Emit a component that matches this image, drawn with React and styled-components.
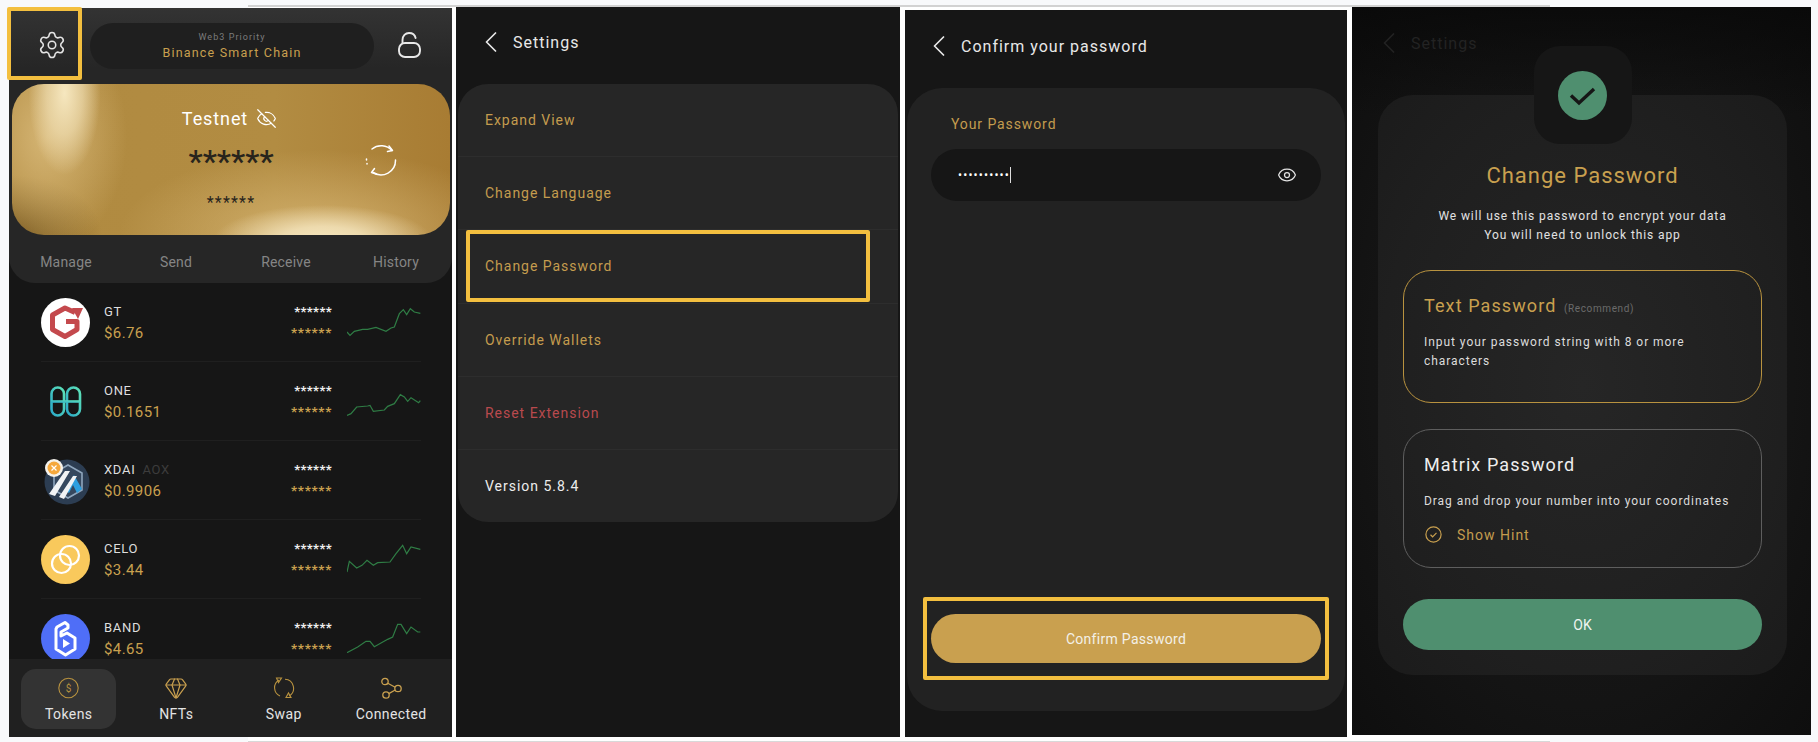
import React from "react";
import styled, { createGlobalStyle } from "styled-components";
import { Settings, EyeOff, Eye, Gem } from "lucide-react";

const tokens = [
  {
    name: "GT",
    price: "$6.76",
    logo: "gt",
    spark: "0,75 9,85 22,73 47,67 62,67 87,61 117,73 132,63 142,60 157,20 169,8 179,23 190,5 202,15 220,19",
  },
  {
    name: "ONE",
    price: "$0.1651",
    logo: "one",
    spark: "0,88 12,83 29,63 62,60 69,58 79,76 112,72 122,61 142,53 160,26 172,33 182,46 192,35 215,50 220,44",
  },
  { name: "XDAI", sub: "AOX", price: "$0.9906", logo: "xdai" },
  {
    name: "CELO",
    price: "$3.44",
    logo: "celo",
    spark: "0,84 7,52 29,72 45,64 60,49 79,64 92,56 129,54 147,29 167,4 179,29 192,9 220,16",
  },
  {
    name: "BAND",
    price: "$4.65",
    logo: "band",
    spark: "0,89 32,72 57,55 69,55 82,71 122,49 137,42 152,4 162,4 179,32 192,12 212,27 220,27",
  },
];

const menu = [
  { label: "Expand View", tone: "gold" },
  { label: "Change Language", tone: "gold" },
  { label: "Change Password", tone: "gold", marked: true },
  { label: "Override Wallets", tone: "gold" },
  { label: "Reset Extension", tone: "red" },
  { label: "Version 5.8.4", tone: "white" },
];

function TokenLogo({ kind }) {
  if (kind === "gt") {
    return (
      <svg width="49" height="49" viewBox="0 0 49 49">
        <circle cx="24.5" cy="24.5" r="24.5" fill="#fff" />
        <path d="M34 14.5 L24 10 L11.5 17 V31.5 L24 38.5 L36 31.5 V23.5 H25" fill="none" stroke="#c4494d" strokeWidth="5" strokeLinejoin="round" />
        <path d="M31 10 L42 10 L37 21 Z" fill="#c4494d" />
      </svg>
    );
  }
  if (kind === "one") {
    return (
      <svg width="49" height="49" viewBox="0 0 49 49">
        <defs>
          <linearGradient id="oneGrad" x1="0" y1="1" x2="1" y2="0">
            <stop offset="0" stopColor="#2aa9c9" />
            <stop offset="1" stopColor="#5fe3b8" />
          </linearGradient>
        </defs>
        <g fill="none" stroke="url(#oneGrad)" strokeWidth="2.6">
          <rect x="10.5" y="10.5" width="12.5" height="28" rx="6.2" />
          <rect x="26" y="10.5" width="13" height="28" rx="6.5" />
        </g>
        <rect x="10" y="23.2" width="29" height="2.6" fill="url(#oneGrad)" />
      </svg>
    );
  }
  if (kind === "xdai") {
    return (
      <svg width="49" height="49" viewBox="0 0 49 49">
        <circle cx="26" cy="26" r="22.5" fill="#2c3d52" />
        <path d="M27 9 L41 17 V34 L27 42 L13 34 V17 Z" fill="#35485f" stroke="#8fa6bd" strokeWidth="1.6" />
        <path d="M24 34 L33 19 L41 33 L36 37 L32 29 L28 37 Z" fill="#2d9fe0" />
        <path d="M8 38 L24 15 H29 L14 40 Z M18 41 L32 20 H36 L23 43 Z" fill="#f1f3f5" />
        <circle cx="13" cy="12" r="9" fill="#f4f2ec" />
        <circle cx="13" cy="12" r="6.5" fill="#f5a83c" />
        <path d="M10.5 9.5 L15.5 14.5 M15.5 9.5 L10.5 14.5" stroke="#fff" strokeWidth="1.2" />
      </svg>
    );
  }
  if (kind === "celo") {
    return (
      <svg width="49" height="49" viewBox="0 0 49 49">
        <circle cx="24.5" cy="24.5" r="24.5" fill="#f9c95c" />
        <g fill="none" stroke="#fff" strokeWidth="2.2">
          <circle cx="20.5" cy="28.5" r="9.5" />
          <circle cx="28.5" cy="20.5" r="9.5" />
        </g>
      </svg>
    );
  }
  return (
    <svg width="49" height="49" viewBox="0 0 49 49">
      <circle cx="24.5" cy="24.5" r="24.5" fill="#4f6ef7" />
      <path d="M16 13 L24 8.5 L27 11 V14 L20 18 V22 L26 19 L34 24 V35 L24.5 41 L15 35 V15 Z" fill="none" stroke="#fff" strokeWidth="3" strokeLinejoin="round" />
      <path d="M22 25 L29 29.5 L22 34 Z" fill="#fff" />
    </svg>
  );
}

function BackArrow() {
  return (
    <svg width="12" height="20" viewBox="0 0 12 20" fill="none" stroke="currentColor" strokeWidth="1.7" strokeLinecap="round" strokeLinejoin="round">
      <path d="M10.5 1 L1.5 10 L10.5 19" />
    </svg>
  );
}

function PanelHeader({ title, height, lift, left, dim }) {
  return (
    <Header $height={height} $lift={lift} $left={left} $dim={dim}>
      <BackArrow />
      <span>{title}</span>
    </Header>
  );
}

function TokensPanel() {
  return (
    <Panel $width={443} $top={8} $height={729}>
      <WalletHead>
        <TopBar>
          <GearBox>
            <Settings size={30} strokeWidth={1.25} color="#e4e4e4" />
          </GearBox>
          <ChainPill>
            <small>Web3 Priority</small>
            <b>Binance Smart Chain</b>
          </ChainPill>
          <LockIcon width="23" height="26" viewBox="0 0 23 26" fill="none" stroke="#e8e8e8" strokeWidth="1.9">
            <rect x="1" y="11" width="21" height="14" rx="6" />
            <path d="M4.5 11 V8 C4.5 3.8 7.5 1 11 1 C14.5 1 17 3 17.6 6" strokeLinecap="round" />
          </LockIcon>
        </TopBar>
        <GoldCard>
          <NetName>
            Testnet <EyeOff size={21} strokeWidth={1.4} color="#fff" />
          </NetName>
          <BigStars>******</BigStars>
          <SmallStars>******</SmallStars>
          <SyncIcon width="32" height="32" viewBox="0 0 32 32" fill="none" stroke="#fff" strokeWidth="1.5" strokeLinecap="round" strokeLinejoin="round">
            <path d="M7 5 A14.5 14.5 0 0 1 27 6.5" />
            <path d="M24 2 L27.5 6.5 L22.5 7.5" />
            <path d="M30.5 16 A14.5 14.5 0 0 1 8 28.5" />
            <path d="M9.5 24.5 L6.5 28.5 L11.5 30" />
            <path d="M1.5 16 V15 M2 20 V19.5" />
          </SyncIcon>
        </GoldCard>
        <Actions>
          <span>Manage</span>
          <span>Send</span>
          <span>Receive</span>
          <span>History</span>
        </Actions>
      </WalletHead>
      <TokenList>
        {tokens.map((t) => (
          <TokenRow key={t.name}>
            <TokenLogo kind={t.logo} />
            <TokenText>
              <span>
                {t.name}
                {t.sub && <em>{t.sub}</em>}
              </span>
              <b>{t.price}</b>
            </TokenText>
            <Balance>
              <span>******</span>
              <b>******</b>
            </Balance>
            <Spark viewBox="0 0 222 90">
              {t.spark && <polyline points={t.spark} fill="none" stroke="#2f7d45" strokeWidth="3.6" />}
            </Spark>
          </TokenRow>
        ))}
      </TokenList>
      <BottomNav>
        <NavTab $active>
          <svg width="21" height="21" viewBox="0 0 21 21">
            <circle cx="10.5" cy="10.5" r="9.7" fill="none" stroke="#b8923f" strokeWidth="1.1" />
            <DollarMark x="10.5" y="14" textAnchor="middle">$</DollarMark>
          </svg>
          <span>Tokens</span>
        </NavTab>
        <NavTab>
          <Gem size={24} strokeWidth={1.2} color="#c9a04f" />
          <span>NFTs</span>
        </NavTab>
        <NavTab>
          <svg width="22" height="22" viewBox="0 0 22 22" fill="none" stroke="#b8923f" strokeWidth="1.1">
            <path d="M6 3 A9 9 0 0 0 7 19" />
            <path d="M12 2.2 A9 9 0 0 1 16 19" />
            <path d="M3.5 1 H8.5 L5.5 5.5 Z M18 20.5 H13 L15.5 16 Z" />
          </svg>
          <span>Swap</span>
        </NavTab>
        <NavTab>
          <svg width="22" height="22" viewBox="0 0 22 22" fill="none" stroke="#c9a04f" strokeWidth="1.3">
            <circle cx="5" cy="4.5" r="3.2" />
            <circle cx="18" cy="11.5" r="3.2" />
            <circle cx="6" cy="18" r="3.2" />
            <path d="M7.8 6.2 L15.2 10.2 M8.8 16.6 L15.2 13" />
          </svg>
          <span>Connected</span>
        </NavTab>
      </BottomNav>
    </Panel>
  );
}

function SettingsPanel() {
  return (
    <Panel $width={444} $top={7} $height={730}>
      <PanelHeader title="Settings" height={77} lift={7} left={29} />
      <MenuCard>
        {menu.map((m) => (
          <MenuRow key={m.label} $tone={m.tone}>
            {m.label}
            {m.marked && <Marker $inset="0 28px 1px 8px" />}
          </MenuRow>
        ))}
      </MenuCard>
    </Panel>
  );
}

function ConfirmPanel() {
  return (
    <Panel $width={442} $top={10} $height={727} $nudge={1}>
      <PanelHeader title="Confirm your password" height={78} lift={6} left={28} />
      <ConfirmCard>
        <FieldLabel>Your Password</FieldLabel>
        <PasswordField>
          <Dots>••••••••••</Dots>
          <Caret />
          <Eye size={20} strokeWidth={1.5} color="#e2e2e2" />
        </PasswordField>
        <ConfirmButton>
          Confirm Password
          <Marker $inset="-17px -8px -17px -8px" />
        </ConfirmButton>
      </ConfirmCard>
    </Panel>
  );
}

function ChangePanel() {
  return (
    <Panel $width={459} $top={7} $height={728} $nudge={1} $glow>
      <PanelHeader title="Settings" height={88} lift={16} left={31} dim />
      <ChangeCard>
        <CheckTile>
          <svg width="49" height="49" viewBox="0 0 49 49">
            <circle cx="24.5" cy="24.5" r="24.5" fill="#4f8f6f" />
            <path d="M13 24.5 L21 32 L36 18" fill="none" stroke="#161616" strokeWidth="3.4" />
          </svg>
        </CheckTile>
        <ChangeTitle>Change Password</ChangeTitle>
        <ChangeText>
          We will use this password to encrypt your data
          <br />
          You will need to unlock this app
        </ChangeText>
        <OptionBox $selected>
          <OptionTitle $selected>
            Text Password <small>(Recommend)</small>
          </OptionTitle>
          <OptionText $selected>Input your password string with 8 or more characters</OptionText>
        </OptionBox>
        <OptionBox>
          <OptionTitle>Matrix Password</OptionTitle>
          <OptionText>Drag and drop your number into your coordinates</OptionText>
          <HintRow>
            <svg width="17" height="17" viewBox="0 0 17 17" fill="none" stroke="#c9a04f" strokeWidth="1.2">
              <circle cx="8.5" cy="8.5" r="7.6" />
              <path d="M5.5 8.8 L7.6 10.8 L11.5 6.8" />
            </svg>
            Show Hint
          </HintRow>
        </OptionBox>
        <OkButton>OK</OkButton>
      </ChangeCard>
    </Panel>
  );
}

export default function App() {
  return (
    <>
      <GlobalStyle />
      <Screens>
        <TokensPanel />
        <SettingsPanel />
        <ConfirmPanel />
        <ChangePanel />
      </Screens>
    </>
  );
}

const GlobalStyle = createGlobalStyle`
  * { box-sizing: border-box; }
  html, body {
    margin: 0;
    height: 100%;
    background: #f8f9fb;
    overflow: hidden;
    font-family: Roboto, "Liberation Sans", sans-serif;
  }
`;

const Screens = styled.div`
  position: relative;
  display: flex;
  align-items: flex-start;
  gap: 4px;
  padding-left: 9px;
  &::before {
    content: "";
    position: absolute;
    left: 248px;
    top: 5px;
    width: 1302px;
    height: 734px;
    background: #fff;
    border-top: 2px solid #d2d2d2;
    border-bottom: 2px solid #d8d8d8;
  }
`;

const Panel = styled.section`
  position: relative;
  flex: none;
  display: flex;
  flex-direction: column;
  width: ${(p) => p.$width}px;
  height: ${(p) => p.$height}px;
  margin-top: ${(p) => p.$top}px;
  margin-left: ${(p) => p.$nudge || 0}px;
  background: ${(p) =>
    p.$glow
      ? "linear-gradient(180deg, rgba(8, 8, 8, 0.75) 0, rgba(8, 8, 8, 0) 110px), radial-gradient(ellipse at 50% 50%, #1a1a1a 0, #141414 65%, #0e0e0e 100%)"
      : "#161616"};
  color: #fff;
`;

const WalletHead = styled.div`
  height: 275px;
  flex: none;
  border-radius: 0 0 26px 26px;
  background: linear-gradient(180deg, #333 0, #262626 60px);
`;

const TopBar = styled.div`
  display: flex;
  align-items: flex-start;
  height: 76px;
`;

const GearBox = styled.div`
  width: 75px;
  height: 73px;
  margin: -1px 0 0 -2px;
  padding: 19px 0 0 26px;
  border: 4px solid #f3bf3f;
  border-radius: 2px;
  flex: none;
`;

const ChainPill = styled.div`
  width: 284px;
  height: 46px;
  margin: 15px 0 0 8px;
  border-radius: 23px;
  background: #1f1f1f;
  display: flex;
  flex-direction: column;
  align-items: center;
  justify-content: center;
  small {
    font-size: 9px;
    line-height: 13px;
    letter-spacing: 1.05px;
    color: #7c7c7c;
  }
  b {
    font-size: 12.5px;
    line-height: 18px;
    font-weight: 400;
    letter-spacing: 1.2px;
    color: #c9a04f;
  }
`;

const LockIcon = styled.svg`
  margin: 24px 0 0 24px;
  flex: none;
`;

const GoldCard = styled.div`
  position: relative;
  height: 151px;
  margin: 0 2px 0 3px;
  border-radius: 32px;
  display: flex;
  flex-direction: column;
  align-items: center;
  background:
    radial-gradient(ellipse 110px 36px at 71% 104%, #f5e6bf 0, rgba(245, 230, 191, 0.8) 40%, rgba(245, 230, 191, 0) 100%),
    radial-gradient(ellipse 200px 85px at 70% 100%, rgba(222, 190, 125, 0.75) 0, rgba(222, 190, 125, 0) 100%),
    radial-gradient(ellipse 36px 82px at 12% 6%, #f6e7bf 0, rgba(246, 231, 191, 0.6) 50%, rgba(246, 231, 191, 0) 100%),
    radial-gradient(ellipse 80px 115px at 8% 35%, rgba(226, 196, 134, 0.75) 0, rgba(226, 196, 134, 0) 100%),
    radial-gradient(ellipse 90px 60px at 0 100%, rgba(112, 82, 28, 0.85) 0, rgba(112, 82, 28, 0) 100%),
    linear-gradient(90deg, #b08a40 0, #b28c42 60%, #a87c33 100%);
`;

const NetName = styled.div`
  display: flex;
  align-items: center;
  gap: 8px;
  height: 24px;
  margin: 22px 3px 0 0;
  font-size: 18px;
  letter-spacing: 0.9px;
`;

const BigStars = styled.div`
  font-size: 32px;
  line-height: 38px;
  height: 34px;
  margin-top: 12px;
  font-weight: 500;
  color: #28241c;
`;

const SmallStars = styled.div`
  font-size: 16px;
  line-height: 18px;
  letter-spacing: 1.2px;
  margin-top: 18px;
  color: #28241c;
`;

const SyncIcon = styled.svg`
  position: absolute;
  right: 53px;
  top: 60px;
`;

const Actions = styled.div`
  display: grid;
  grid-template-columns: repeat(4, 110px);
  margin-left: 2px;
  height: 48px;
  padding-top: 6px;
  align-items: center;
  justify-items: center;
  font-size: 14px;
  letter-spacing: 0.2px;
  color: #858585;
`;

const TokenList = styled.div`
  flex: 1;
  min-height: 0;
  overflow: hidden;
`;

const TokenRow = styled.div`
  height: 79px;
  margin: 0 31px 0 32px;
  display: flex;
  align-items: center;
  border-bottom: 1px solid #1f1f1f;
  svg {
    flex: none;
  }
`;

const TokenText = styled.div`
  flex: 1;
  margin-left: 14px;
  display: flex;
  flex-direction: column;
  letter-spacing: 0.4px;
  span {
    font-size: 13px;
    line-height: 21px;
    letter-spacing: 0.7px;
    color: #dedede;
  }
  em {
    font-style: normal;
    margin-left: 7px;
    color: #3c3c3c;
  }
  b {
    font-size: 15px;
    line-height: 22px;
    font-weight: 400;
    color: #c9a04f;
  }
`;

const Balance = styled.div`
  display: flex;
  flex-direction: column;
  align-items: flex-end;
  margin-right: 15px;
  font-size: 13px;
  span {
    line-height: 21px;
    letter-spacing: 0.4px;
    font-weight: 700;
    color: #f0f0f0;
  }
  b {
    line-height: 21px;
    font-size: 13.5px;
    letter-spacing: 0.7px;
    font-weight: 700;
    color: #c9a04f;
  }
`;

const Spark = styled.svg`
  width: 74px;
  height: 30px;
`;

const BottomNav = styled.nav`
  height: 78px;
  flex: none;
  padding: 10px 0 0 6px;
  display: grid;
  grid-template-columns: repeat(4, 107.5px);
  align-items: start;
  justify-items: center;
  background: #202020;
`;

const NavTab = styled.div`
  width: 95px;
  height: 60px;
  border-radius: 15px;
  padding-top: 7px;
  display: flex;
  flex-direction: column;
  align-items: center;
  background: ${(p) => (p.$active ? "#333" : "transparent")};
  svg {
    flex: none;
    height: 24px;
  }
  span {
    margin-top: 4px;
    font-size: 14px;
    line-height: 20px;
    letter-spacing: 0.4px;
    color: #e4e4e4;
  }
`;

const DollarMark = styled.text`
  font-size: 10px;
  font-family: Roboto, sans-serif;
  fill: #b8923f;
`;

const Header = styled.header`
  flex: none;
  display: flex;
  align-items: center;
  gap: 16px;
  height: ${(p) => p.$height}px;
  padding: 0 0 ${(p) => p.$lift}px ${(p) => p.$left}px;
  font-size: 16px;
  letter-spacing: 1px;
  color: ${(p) => (p.$dim ? "#232323" : "#e8e8e8")};
`;

const MenuCard = styled.div`
  margin: 0 2px;
  height: 438px;
  border-radius: 30px;
  background: #262626;
  display: flex;
  flex-direction: column;
`;

const toneColors = { gold: "#c49c4e", red: "#b94a4e", white: "#ececec" };

const MenuRow = styled.div`
  position: relative;
  flex: 1;
  display: flex;
  align-items: center;
  padding-left: 27px;
  font-size: 14px;
  letter-spacing: 0.98px;
  color: ${(p) => toneColors[p.$tone]};
  border-bottom: 1px solid #2d2d2d;
  &:last-child {
    border-bottom: 0;
  }
`;

const Marker = styled.i`
  position: absolute;
  inset: ${(p) => p.$inset};
  border: 4px solid #f3bf3f;
  border-radius: 2px;
`;

const ConfirmCard = styled.div`
  height: 623px;
  margin: 0 2px;
  padding: 0 24px 48px;
  border-radius: 35px;
  background: #222;
  display: flex;
  flex-direction: column;
`;

const FieldLabel = styled.div`
  margin: 26px 0 15px 20px;
  font-size: 14px;
  line-height: 20px;
  letter-spacing: 0.9px;
  color: #c49c4e;
`;

const PasswordField = styled.div`
  height: 52px;
  border-radius: 26px;
  background: #161616;
  padding: 0 24px 0 27px;
  display: flex;
  align-items: center;
  svg {
    margin-left: auto;
  }
`;

const Dots = styled.span`
  font-size: 12px;
  letter-spacing: 1.15px;
  color: #fff;
`;

const Caret = styled.i`
  width: 1px;
  height: 16px;
  background: #ddd;
`;

const ConfirmButton = styled.div`
  position: relative;
  height: 49px;
  margin-top: auto;
  border-radius: 25px;
  background: #c9a04f;
  display: flex;
  align-items: center;
  justify-content: center;
  font-size: 14px;
  letter-spacing: 0.3px;
  color: #f3f0e8;
`;

const ChangeCard = styled.div`
  width: 409px;
  height: 580px;
  margin-left: 26px;
  padding: 0 25px;
  border-radius: 35px;
  background: radial-gradient(ellipse at 50% 50%, #262626 0, #1f1f1f 70%, #1b1b1b 100%);
  display: flex;
  flex-direction: column;
`;

const CheckTile = styled.div`
  width: 98px;
  height: 98px;
  margin: -49px auto 0;
  border-radius: 26px;
  background: #161616;
  display: flex;
  align-items: center;
  justify-content: center;
`;

const ChangeTitle = styled.h2`
  margin: 17px 0 0;
  font-size: 22px;
  line-height: 30px;
  font-weight: 400;
  letter-spacing: 1px;
  text-align: center;
  color: #c9a04f;
`;

const ChangeText = styled.p`
  margin: 16px 0 0;
  font-size: 12px;
  line-height: 19px;
  letter-spacing: 0.9px;
  text-align: center;
  color: #e2e2e2;
`;

const OptionBox = styled.div`
  height: ${(p) => (p.$selected ? 133 : 139)}px;
  margin-top: ${(p) => (p.$selected ? 25 : 26)}px;
  padding: 23px 20px 0;
  border-radius: 28px;
  border: 1.5px solid ${(p) => (p.$selected ? "#b8923f" : "#5e5e5e")};
`;

const OptionTitle = styled.div`
  font-size: 18px;
  line-height: 24px;
  letter-spacing: 1.1px;
  color: ${(p) => (p.$selected ? "#c9a04f" : "#eee")};
  small {
    font-size: 10px;
    letter-spacing: 0.6px;
    margin-left: 2px;
    color: #6b6b6b;
  }
`;

const OptionText = styled.p`
  margin: ${(p) => (p.$selected ? 12 : 15)}px 0 0;
  font-size: 12px;
  line-height: 19px;
  letter-spacing: 0.95px;
  color: #dcdcdc;
`;

const HintRow = styled.div`
  display: flex;
  align-items: center;
  gap: 15px;
  margin-top: 15px;
  padding-left: 1px;
  font-size: 14px;
  letter-spacing: 1px;
  color: #c49c4e;
`;

const OkButton = styled.div`
  height: 51px;
  margin-top: 31px;
  border-radius: 26px;
  background: #4f8f6f;
  display: flex;
  align-items: center;
  justify-content: center;
  font-size: 14px;
  color: #eef4f0;
`;
